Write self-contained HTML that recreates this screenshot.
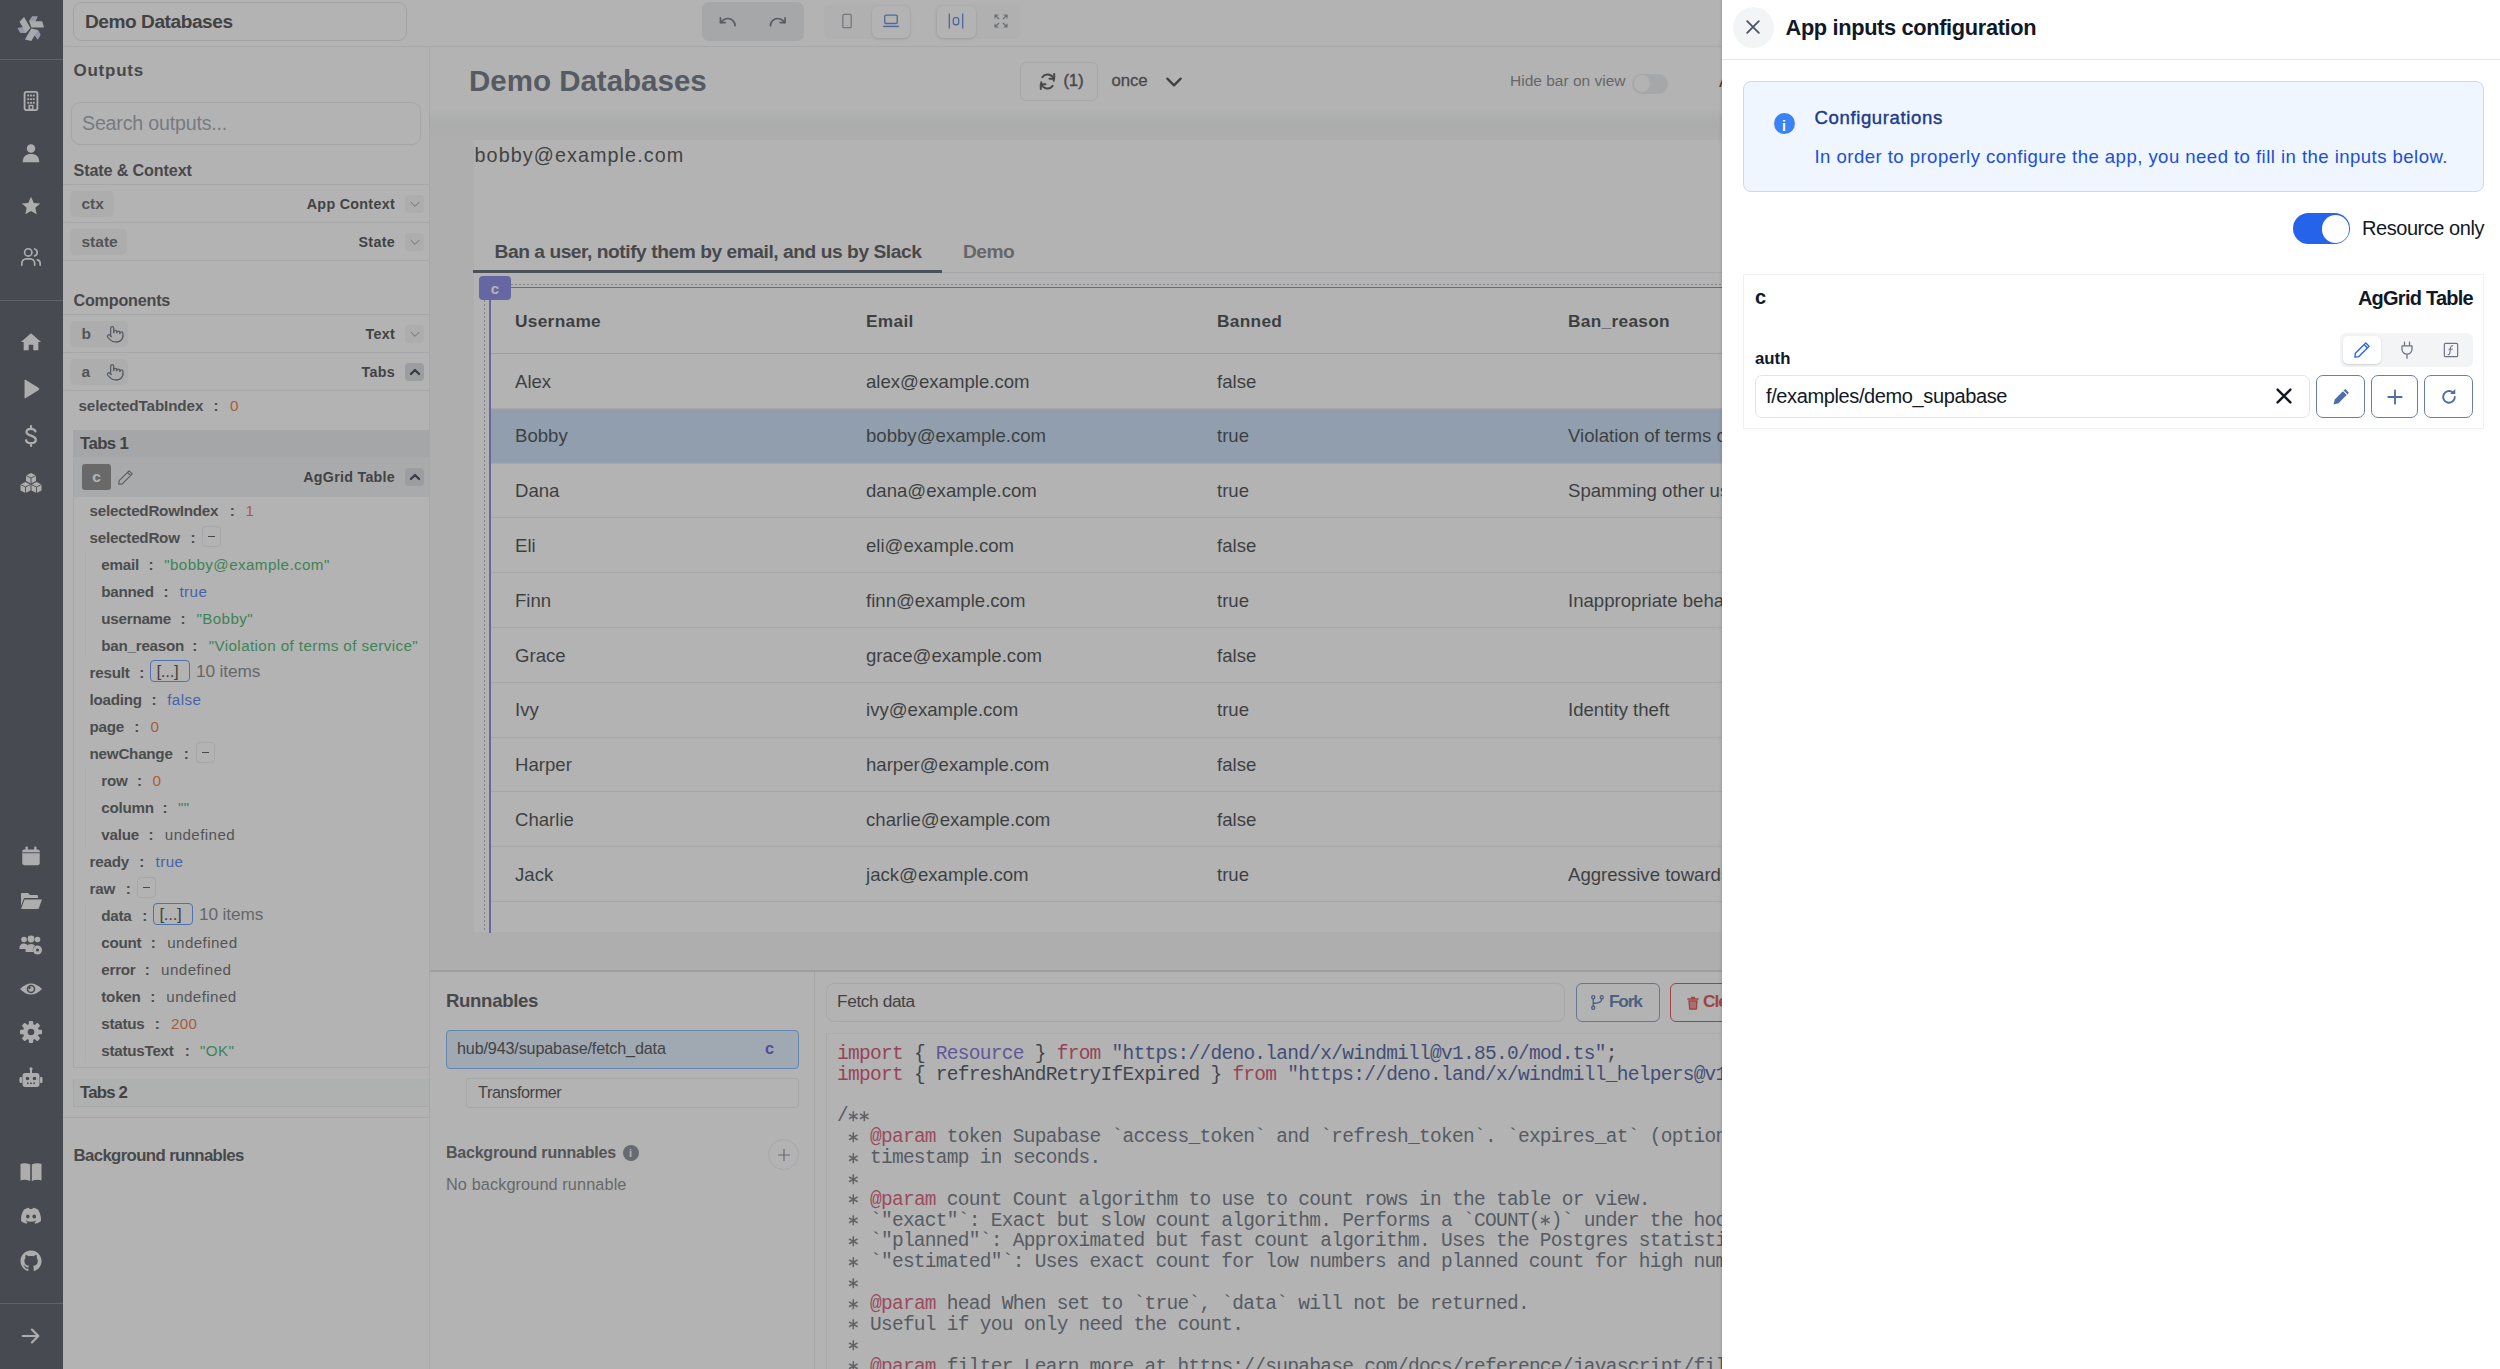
<!DOCTYPE html><html><head><meta charset="utf-8"><style>
html,body{margin:0;padding:0;width:2500px;height:1369px;overflow:hidden;background:#fff;}
.t{position:absolute;white-space:pre;line-height:1;font-family:'Liberation Sans',sans-serif;}
.r{position:absolute;box-sizing:border-box;}
</style></head><body>
<div class="r" style="left:0px;top:0px;width:63px;height:1369px;background:#2e3440;"></div>
<div class="r" style="left:0px;top:59px;width:63px;height:1px;background:#5b6170;"></div>
<div class="r" style="left:0px;top:300px;width:63px;height:1px;background:#5b6170;"></div>
<div class="r" style="left:0px;top:1303px;width:63px;height:1px;background:#5b6170;"></div>
<svg class="r" style="left:16.0px;top:12.5px;" width="30" height="30" viewBox="-15 -15 30 30"><g><polygon points="0.3,-0.5 13,-0.5 11.2,-6.8 4.4,-6.8 6.6,-11.6 1.2,-11.6 -1.8,-6.9" fill="#eceef6"/><polygon points="1.2,-11.6 6.6,-11.6 4.4,-6.8 -1.8,-6.9" fill="#c8c8ee"/></g><g transform="rotate(120)"><polygon points="0.3,-0.5 13,-0.5 11.2,-6.8 4.4,-6.8 6.6,-11.6 1.2,-11.6 -1.8,-6.9" fill="#eceef6"/><polygon points="1.2,-11.6 6.6,-11.6 4.4,-6.8 -1.8,-6.9" fill="#c8c8ee"/></g><g transform="rotate(240)"><polygon points="0.3,-0.5 13,-0.5 11.2,-6.8 4.4,-6.8 6.6,-11.6 1.2,-11.6 -1.8,-6.9" fill="#eceef6"/><polygon points="1.2,-11.6 6.6,-11.6 4.4,-6.8 -1.8,-6.9" fill="#c8c8ee"/></g></svg>
<svg class="r" style="left:20.0px;top:90.0px;" width="22" height="22" viewBox="0 0 24 24"><rect x="5" y="2" width="14" height="20" rx="2" fill="none" stroke="#f3f4f6" stroke-width="2"/>
<g fill="#f3f4f6"><rect x="8" y="5" width="2" height="2"/><rect x="11" y="5" width="2" height="2"/><rect x="14" y="5" width="2" height="2"/>
<rect x="8" y="9" width="2" height="2"/><rect x="11" y="9" width="2" height="2"/><rect x="14" y="9" width="2" height="2"/>
<rect x="8" y="13" width="2" height="2"/><rect x="11" y="13" width="2" height="2"/><rect x="14" y="13" width="2" height="2"/>
<rect x="10" y="17" width="4" height="4" fill="none" stroke="#f3f4f6" stroke-width="1.6"/></g></svg>
<svg class="r" style="left:20.0px;top:142.0px;" width="22" height="22" viewBox="0 0 24 24"><circle cx="12" cy="7" r="4.6" fill="#f3f4f6"/><path d="M3,22 C3,15.5 6.5,13 12,13 C17.5,13 21,15.5 21,22 Z" fill="#f3f4f6"/></svg>
<svg class="r" style="left:20.0px;top:195.0px;" width="22" height="22" viewBox="0 0 24 24"><path d="M12,2 L15,8.6 L22,9.3 L16.7,14 L18.2,21 L12,17.4 L5.8,21 L7.3,14 L2,9.3 L9,8.6 Z" fill="#f3f4f6"/></svg>
<svg class="r" style="left:20.0px;top:246.0px;" width="22" height="22" viewBox="0 0 24 24"><g fill="none" stroke="#f3f4f6" stroke-width="1.8" stroke-linecap="round"><circle cx="9" cy="7" r="4"/><path d="M2,21 v-2 a5,5 0 0 1 5,-5 h4 a5,5 0 0 1 5,5 v2"/><path d="M16,3.2 a4,4 0 0 1 0,7.6"/><path d="M22,21 v-2 a4,4 0 0 0 -3,-3.9"/></g></svg>
<svg class="r" style="left:20.0px;top:331.0px;" width="22" height="22" viewBox="0 0 24 24"><path d="M12,2.5 L23,12 L20,12 L20,21 L14.5,21 L14.5,15 L9.5,15 L9.5,21 L4,21 L4,12 L1,12 Z" fill="#f3f4f6"/></svg>
<svg class="r" style="left:20.0px;top:378.0px;" width="22" height="22" viewBox="0 0 24 24"><path d="M5,2.5 Q5,1.5 6,2 L20.5,11 Q21.5,12 20.5,13 L6,22 Q5,22.5 5,21.5 Z" fill="#f3f4f6"/></svg>
<svg class="r" style="left:19.0px;top:424.0px;" width="24" height="24" viewBox="0 0 24 24"><path d="M16.5,7.5 C16,5.5 14,4.8 12,4.8 C9.5,4.8 7.5,6 7.5,8 C7.5,12.5 16.8,10.8 16.8,15.8 C16.8,18 14.5,19.2 12,19.2 C9.5,19.2 7.5,18.3 7,16.2 M12,2 V4.8 M12,19.2 V22" fill="none" stroke="#f3f4f6" stroke-width="2.2" stroke-linecap="round"/></svg>
<svg class="r" style="left:19.0px;top:471.0px;" width="24" height="24" viewBox="0 0 24 24"><g fill="#f3f4f6"><path d="M12,2 L17,4.5 L17,10 L12,12.5 L7,10 L7,4.5 Z"/><path d="M6.5,11 L11.5,13.5 L11.5,19.5 L6.5,22 L1.5,19.5 L1.5,13.5 Z"/><path d="M17.5,11 L22.5,13.5 L22.5,19.5 L17.5,22 L12.5,19.5 L12.5,13.5 Z"/></g>
<g fill="none" stroke="#2e3440" stroke-width="0.9"><path d="M7,4.5 L12,7 L17,4.5 M12,7 V12.5"/><path d="M1.5,13.5 L6.5,16 L11.5,13.5 M6.5,16 V22"/><path d="M12.5,13.5 L17.5,16 L22.5,13.5 M17.5,16 V22"/></g></svg>
<svg class="r" style="left:20.0px;top:845.0px;" width="22" height="22" viewBox="0 0 24 24"><g fill="#f3f4f6"><rect x="2.5" y="5" width="19" height="17" rx="2"/><rect x="6" y="1.5" width="2.5" height="5" rx="1"/><rect x="15.5" y="1.5" width="2.5" height="5" rx="1"/></g><rect x="2.5" y="8" width="19" height="1" fill="#2e3440"/></svg>
<svg class="r" style="left:19.0px;top:889.0px;" width="24" height="24" viewBox="0 0 24 24"><path d="M2,5 Q2,4 3,4 L9,4 L11,6 L18,6 Q19,6 19,7 L19,9 L6,9 Q5,9 4.6,10 L2,17 Z" fill="#f3f4f6"/><path d="M5.5,10.5 L23,10.5 L19.5,20 L2,20 Z" fill="#f3f4f6"/></svg>
<svg class="r" style="left:19.0px;top:933.0px;" width="24" height="24" viewBox="0 0 24 24"><g fill="#f3f4f6"><circle cx="5" cy="6.5" r="2.8"/><circle cx="12" cy="6" r="3.4"/><circle cx="18.5" cy="6.5" r="2.8"/>
<path d="M0.5,15 Q0.5,10.5 5,10.5 Q7.5,10.5 8.5,12 L8,16 L0.5,16 Z"/><path d="M6.5,19 Q6.5,11 12,11 Q15,11 16,12.5 Q13.5,14 13.8,17 Q14,18.5 14.5,19 Z"/>
<circle cx="18.5" cy="17" r="4.5"/></g><circle cx="18.5" cy="17" r="1.6" fill="#2e3440"/></svg>
<svg class="r" style="left:19.0px;top:977.0px;" width="24" height="24" viewBox="0 0 24 24"><path d="M1,12 Q12,1 23,12 Q12,23 1,12 Z" fill="#f3f4f6"/><circle cx="12" cy="12" r="4.3" fill="#2e3440"/><circle cx="12" cy="12" r="2.7" fill="#f3f4f6"/><circle cx="10.6" cy="10.8" r="1.3" fill="#2e3440"/></svg>
<svg class="r" style="left:19.0px;top:1019.5px;" width="24" height="24" viewBox="0 0 24 24"><g fill="#f3f4f6" transform="translate(12 12)">
<circle r="8"/>
<rect x="-2.2" y="-11" width="4.4" height="22" rx="1"/>
<rect x="-2.2" y="-11" width="4.4" height="22" rx="1" transform="rotate(45)"/>
<rect x="-2.2" y="-11" width="4.4" height="22" rx="1" transform="rotate(90)"/>
<rect x="-2.2" y="-11" width="4.4" height="22" rx="1" transform="rotate(135)"/>
</g><circle cx="12" cy="12" r="3.3" fill="#2e3440"/></svg>
<svg class="r" style="left:19.0px;top:1066.0px;" width="24" height="24" viewBox="0 0 24 24"><g fill="#f3f4f6"><rect x="3.5" y="7" width="17" height="14" rx="3"/><rect x="11" y="2.5" width="2" height="5"/><circle cx="12" cy="2.8" r="1.6"/><rect x="0.5" y="11" width="2.5" height="6" rx="1"/><rect x="21" y="11" width="2.5" height="6" rx="1"/></g>
<g fill="#2e3440"><circle cx="8.5" cy="12.5" r="1.8"/><circle cx="15.5" cy="12.5" r="1.8"/><rect x="8" y="16.5" width="1.6" height="1.6"/><rect x="11.2" y="16.5" width="1.6" height="1.6"/><rect x="14.4" y="16.5" width="1.6" height="1.6"/></g></svg>
<svg class="r" style="left:19.0px;top:1160.0px;" width="24" height="24" viewBox="0 0 24 24"><g fill="#f3f4f6"><path d="M1.5,4 Q6,2.5 11.2,4.5 L11.2,21 Q6,19 1.5,20.5 Z"/><path d="M22.5,4 Q18,2.5 12.8,4.5 L12.8,21 Q18,19 22.5,20.5 Z"/></g></svg>
<svg class="r" style="left:19.0px;top:1204.0px;" width="24" height="24" viewBox="0 0 24 24"><path d="M5,5.5 Q8,4 10,3.8 L10.6,5 Q12,4.8 13.4,5 L14,3.8 Q16,4 19,5.5 Q22.3,10.5 22,17 Q19.5,19 16.5,19.7 L15.4,18 Q16.5,17.6 17.4,17 L17,16.6 Q12,19 7,16.6 L6.6,17 Q7.5,17.6 8.6,18 L7.5,19.7 Q4.5,19 2,17 Q1.7,10.5 5,5.5 Z" fill="#f3f4f6"/>
<ellipse cx="8.8" cy="12.6" rx="1.8" ry="2" fill="#2e3440"/><ellipse cx="15.2" cy="12.6" rx="1.8" ry="2" fill="#2e3440"/></svg>
<svg class="r" style="left:19.0px;top:1249.0px;" width="24" height="24" viewBox="0 0 24 24"><path fill="#f3f4f6" d="M12 1.5C6.2 1.5 1.5 6.2 1.5 12c0 4.6 3 8.6 7.2 10 .5.1.7-.2.7-.5v-1.8c-2.9.6-3.5-1.4-3.5-1.4-.5-1.2-1.2-1.5-1.2-1.5-1-.6.1-.6.1-.6 1 .1 1.6 1.1 1.6 1.1.9 1.6 2.5 1.1 3.1.9.1-.7.4-1.1.7-1.4-2.3-.3-4.8-1.2-4.8-5.1 0-1.1.4-2 1.1-2.8-.1-.3-.5-1.3.1-2.8 0 0 .9-.3 2.9 1.1.8-.2 1.7-.3 2.6-.3.9 0 1.8.1 2.6.3 2-1.4 2.9-1.1 2.9-1.1.6 1.5.2 2.5.1 2.8.7.8 1.1 1.7 1.1 2.8 0 3.9-2.4 4.8-4.8 5.1.4.3.7 1 .7 1.9v2.9c0 .3.2.6.7.5 4.2-1.4 7.2-5.4 7.2-10C22.5 6.2 17.8 1.5 12 1.5z"/></svg>
<svg class="r" style="left:20.0px;top:1325.0px;" width="22" height="22" viewBox="0 0 24 24"><path d="M3,12 H20 M13,5 L20,12 L13,19" fill="none" stroke="#f3f4f6" stroke-width="2.4" stroke-linecap="round" stroke-linejoin="round"/></svg>
<div class="r" style="left:63px;top:0px;width:1659px;height:46px;background:#ffffff;"></div>
<div class="r" style="left:63px;top:46px;width:1659px;height:1px;background:#e5e7eb;"></div>
<div class="r" style="left:73px;top:2px;width:334px;height:39px;background:#fff;border:1px solid #dde0e4;border-radius:9px;"></div>
<div class="t" style="left:85px;top:12.07px;font-size:19.1px;font-weight:700;color:#222325;letter-spacing:-0.45px;font-family:'Liberation Sans', sans-serif;">Demo Databases</div>
<div class="r" style="left:702px;top:2px;width:102px;height:39px;background:#e5e7eb;border-radius:7px;"></div>
<svg class="r" style="left:717.8px;top:11.8px;" width="19.5" height="19.5" viewBox="0 0 24 24"><g fill="none" stroke="#4b5563" stroke-width="2" stroke-linecap="round" stroke-linejoin="round"><path d="M3 7v6h6"/><path d="M21 17a9 9 0 0 0-9-9 9 9 0 0 0-6 2.3L3 13"/></g></svg>
<svg class="r" style="left:768.2px;top:11.8px;" width="19.5" height="19.5" viewBox="0 0 24 24"><g fill="none" stroke="#4b5563" stroke-width="2" stroke-linecap="round" stroke-linejoin="round"><path d="M21 7v6h-6"/><path d="M3 17a9 9 0 0 1 9-9 9 9 0 0 1 6 2.3l3 2.7"/></g></svg>
<div class="r" style="left:824px;top:4px;width:87px;height:35px;background:#f9fafb;border-radius:7px;"></div>
<div class="r" style="left:872px;top:6px;width:38px;height:32px;background:#ffffff;border-radius:6px;box-shadow:0 1px 3px rgba(0,0,0,0.18);"></div>
<svg class="r" style="left:837.5px;top:12.0px;" width="18" height="18" viewBox="0 0 24 24"><rect x="6.5" y="3" width="11" height="18" rx="1.5" fill="none" stroke="#6b7280" stroke-width="1.4"/><circle cx="12" cy="18" r="0.6" fill="#6b7280"/></svg>
<svg class="r" style="left:881.0px;top:11.0px;" width="20" height="20" viewBox="0 0 24 24"><rect x="4.5" y="5" width="15" height="10" rx="1.5" fill="none" stroke="#3b6fd1" stroke-width="1.6"/><path d="M2.5,18.5 H21.5" stroke="#3b6fd1" stroke-width="1.8"/></svg>
<div class="r" style="left:934px;top:4px;width:87px;height:35px;background:#f9fafb;border-radius:7px;"></div>
<div class="r" style="left:937px;top:6px;width:39px;height:32px;background:#ffffff;border-radius:6px;box-shadow:0 1px 3px rgba(0,0,0,0.18);"></div>
<svg class="r" style="left:946.0px;top:11.0px;" width="20" height="20" viewBox="0 0 24 24"><path d="M4,3 V21 M20,3 V21" stroke="#3b6fd1" stroke-width="1.6"/><rect x="8.8" y="8" width="6.4" height="8.5" rx="2.5" fill="none" stroke="#3b6fd1" stroke-width="1.6"/></svg>
<svg class="r" style="left:991.5px;top:12.0px;" width="18" height="18" viewBox="0 0 24 24"><path d="M4,4 L9,9 M4,4 V8 M4,4 H8 M20,4 L15,9 M20,4 V8 M20,4 H16 M4,20 L9,15 M4,20 V16 M4,20 H8 M20,20 L15,15 M20,20 V16 M20,20 H16" fill="none" stroke="#6b7280" stroke-width="1.5" stroke-linecap="round"/></svg>
<div class="r" style="left:63px;top:47px;width:366px;height:1322px;background:#ffffff;"></div>
<div class="r" style="left:429px;top:47px;width:1px;height:1322px;background:#e5e7eb;"></div>
<div class="t" style="left:73.5px;top:61.75px;font-size:17px;font-weight:700;color:#2f3033;letter-spacing:0.75px;font-family:'Liberation Sans', sans-serif;">Outputs</div>
<div class="r" style="left:71px;top:102px;width:350px;height:43px;background:#fff;border:1px solid #e2e4e8;border-radius:9px;"></div>
<div class="t" style="left:82px;top:113.94px;font-size:19.6px;font-weight:400;color:#8b929c;letter-spacing:-0.18px;font-family:'Liberation Sans', sans-serif;">Search outputs...</div>
<div class="t" style="left:73.5px;top:162.03px;font-size:16.2px;font-weight:700;color:#2f3033;letter-spacing:-0.15px;font-family:'Liberation Sans', sans-serif;">State &amp; Context</div>
<div class="r" style="left:63px;top:184px;width:366px;height:1px;background:#e5e7eb;"></div>
<div class="r" style="left:63px;top:222px;width:366px;height:1px;background:#e5e7eb;"></div>
<div class="r" style="left:70px;top:191px;width:44px;height:26px;background:#f3f4f6;border-radius:5px;"></div>
<div class="t" style="left:81.5px;top:196.32px;font-size:15.5px;font-weight:700;color:#45474b;letter-spacing:0px;font-family:'Liberation Sans', sans-serif;">ctx</div>
<div class="t" style="right:2105px;top:196.84px;font-size:14.3px;font-weight:700;color:#222325;letter-spacing:0.3px;font-family:'Liberation Sans', sans-serif;">App Context</div>
<div class="r" style="left:405px;top:195.0px;width:19px;height:18.0px;background:#f3f4f6;border-radius:4px;"></div>
<svg class="r" style="left:407.5px;top:197.0px;" width="14" height="14" viewBox="0 0 24 24"><path d="M5,9 L12,16 L19,9" fill="none" stroke="#6b7280" stroke-width="1.6" stroke-linecap="round" stroke-linejoin="round"/></svg>
<div class="r" style="left:63px;top:260px;width:366px;height:1px;background:#e5e7eb;"></div>
<div class="r" style="left:70px;top:229px;width:57px;height:26px;background:#f3f4f6;border-radius:5px;"></div>
<div class="t" style="left:81.5px;top:234.32px;font-size:15.5px;font-weight:700;color:#45474b;letter-spacing:0px;font-family:'Liberation Sans', sans-serif;">state</div>
<div class="t" style="right:2105px;top:234.84px;font-size:14.3px;font-weight:700;color:#222325;letter-spacing:0.3px;font-family:'Liberation Sans', sans-serif;">State</div>
<div class="r" style="left:405px;top:233.0px;width:19px;height:18.0px;background:#f3f4f6;border-radius:4px;"></div>
<svg class="r" style="left:407.5px;top:235.0px;" width="14" height="14" viewBox="0 0 24 24"><path d="M5,9 L12,16 L19,9" fill="none" stroke="#6b7280" stroke-width="1.6" stroke-linecap="round" stroke-linejoin="round"/></svg>
<div class="t" style="left:73.5px;top:291.73px;font-size:16.2px;font-weight:700;color:#2f3033;letter-spacing:-0.23px;font-family:'Liberation Sans', sans-serif;">Components</div>
<div class="r" style="left:63px;top:314px;width:366px;height:1px;background:#e5e7eb;"></div>
<div class="r" style="left:63px;top:352px;width:366px;height:1px;background:#e5e7eb;"></div>
<div class="r" style="left:70px;top:321px;width:58px;height:26px;background:#f3f4f6;border-radius:5px;"></div>
<div class="t" style="left:81.5px;top:326.32px;font-size:15.5px;font-weight:700;color:#45474b;letter-spacing:0px;font-family:'Liberation Sans', sans-serif;">b</div>
<svg class="r" style="left:106.2px;top:324.8px;" width="18.5" height="18.5" viewBox="0 0 24 24"><g fill="none" stroke="#4b5563" stroke-width="1.6" stroke-linecap="round" stroke-linejoin="round"><path d="M22 14a8 8 0 0 1-8 8"/><path d="M18 11v-1a2 2 0 0 0-2-2a2 2 0 0 0-2 2"/><path d="M14 10V9a2 2 0 0 0-2-2a2 2 0 0 0-2 2v1"/><path d="M10 9.5V4a2 2 0 0 0-2-2a2 2 0 0 0-2 2v10"/><path d="M18 11a2 2 0 1 1 4 0v3a8 8 0 0 1-8 8h-2c-2.8 0-4.5-.86-5.990-2.340l-3.6-3.6a2 2 0 0 1 2.83-2.82L7 15"/></g></svg>
<div class="t" style="right:2105px;top:326.85px;font-size:14.3px;font-weight:700;color:#222325;letter-spacing:0.3px;font-family:'Liberation Sans', sans-serif;">Text</div>
<div class="r" style="left:405px;top:325.0px;width:19px;height:18.0px;background:#f3f4f6;border-radius:4px;"></div>
<svg class="r" style="left:407.5px;top:327.0px;" width="14" height="14" viewBox="0 0 24 24"><path d="M5,9 L12,16 L19,9" fill="none" stroke="#6b7280" stroke-width="1.6" stroke-linecap="round" stroke-linejoin="round"/></svg>
<div class="r" style="left:63px;top:390px;width:366px;height:1px;background:#e5e7eb;"></div>
<div class="r" style="left:70px;top:359px;width:58px;height:26px;background:#f3f4f6;border-radius:5px;"></div>
<div class="t" style="left:81.5px;top:364.32px;font-size:15.5px;font-weight:700;color:#45474b;letter-spacing:0px;font-family:'Liberation Sans', sans-serif;">a</div>
<svg class="r" style="left:106.2px;top:362.8px;" width="18.5" height="18.5" viewBox="0 0 24 24"><g fill="none" stroke="#4b5563" stroke-width="1.6" stroke-linecap="round" stroke-linejoin="round"><path d="M22 14a8 8 0 0 1-8 8"/><path d="M18 11v-1a2 2 0 0 0-2-2a2 2 0 0 0-2 2"/><path d="M14 10V9a2 2 0 0 0-2-2a2 2 0 0 0-2 2v1"/><path d="M10 9.5V4a2 2 0 0 0-2-2a2 2 0 0 0-2 2v10"/><path d="M18 11a2 2 0 1 1 4 0v3a8 8 0 0 1-8 8h-2c-2.8 0-4.5-.86-5.990-2.340l-3.6-3.6a2 2 0 0 1 2.83-2.82L7 15"/></g></svg>
<div class="t" style="right:2105px;top:364.85px;font-size:14.3px;font-weight:700;color:#222325;letter-spacing:0.3px;font-family:'Liberation Sans', sans-serif;">Tabs</div>
<div class="r" style="left:405px;top:363.0px;width:19px;height:18.0px;background:#d1d5db;border-radius:4px;"></div>
<svg class="r" style="left:407.5px;top:365.0px;" width="14" height="14" viewBox="0 0 24 24"><path d="M5,15.5 L12,8.5 L19,15.5" fill="none" stroke="#111827" stroke-width="4" stroke-linecap="round" stroke-linejoin="round"/></svg>
<div class="t" style="left:78.5px;top:398.38px;font-size:15.2px;font-weight:700;color:#35373a;letter-spacing:-0.1px;font-family:'Liberation Sans', sans-serif;">selectedTabIndex</div>
<div class="t" style="left:216px;top:398.38px;font-size:15.2px;font-weight:700;color:#35373a;letter-spacing:0px;font-family:'Liberation Sans', sans-serif;transform:translateX(-50%);">:</div>
<div class="t" style="left:230px;top:398.38px;font-size:15.2px;font-weight:400;color:#ea580c;letter-spacing:0.3px;font-family:'Liberation Sans', sans-serif;">0</div>
<div class="r" style="left:73px;top:430px;width:356px;height:27px;background:#e3e5e8;"></div>
<div class="t" style="left:80px;top:435.92px;font-size:16.8px;font-weight:700;color:#222325;letter-spacing:-0.6px;font-family:'Liberation Sans', sans-serif;">Tabs 1</div>
<div class="r" style="left:73px;top:457px;width:356px;height:40px;background:#eceef1;"></div>
<div class="r" style="left:73px;top:457px;width:1px;height:611px;background:#e5e7eb;"></div>
<div class="r" style="left:73px;top:1067px;width:356px;height:1px;background:#e5e7eb;"></div>
<div class="r" style="left:82px;top:464px;width:29px;height:26px;background:#707070;border-radius:3px;"></div>
<div class="t" style="left:96.5px;top:468.82px;font-size:15.5px;font-weight:700;color:#ffffff;letter-spacing:0px;font-family:'Liberation Sans', sans-serif;transform:translateX(-50%);">c</div>
<svg class="r" style="left:116.0px;top:467.5px;" width="19" height="19" viewBox="0 0 24 24"><path d="M16.5,3.5 L20.5,7.5 L8,20 L3.5,20.5 L4,16 Z M14.5,5.5 L18.5,9.5" fill="none" stroke="#4b5563" stroke-width="1.4" stroke-linejoin="round"/></svg>
<div class="t" style="right:2105px;top:469.54px;font-size:14.3px;font-weight:700;color:#222325;letter-spacing:0.25px;font-family:'Liberation Sans', sans-serif;">AgGrid Table</div>
<div class="r" style="left:405px;top:468px;width:19px;height:18px;background:#d1d5db;border-radius:4px;"></div>
<svg class="r" style="left:407.5px;top:470.0px;" width="14" height="14" viewBox="0 0 24 24"><path d="M5,15.5 L12,8.5 L19,15.5" fill="none" stroke="#111827" stroke-width="4" stroke-linecap="round" stroke-linejoin="round"/></svg>
<div class="t" style="left:89.6px;top:502.58px;font-size:15.2px;font-weight:700;color:#35373a;letter-spacing:-0.25px;font-family:'Liberation Sans', sans-serif;">selectedRowIndex</div>
<div class="t" style="left:232.3px;top:502.58px;font-size:15.2px;font-weight:700;color:#35373a;letter-spacing:0px;font-family:'Liberation Sans', sans-serif;transform:translateX(-50%);">:</div>
<div class="t" style="left:245.5px;top:502.58px;font-size:15.2px;font-weight:400;color:#ea580c;letter-spacing:0.4px;font-family:'Liberation Sans', sans-serif;">1</div>
<div class="t" style="left:89.6px;top:529.58px;font-size:15.2px;font-weight:700;color:#35373a;letter-spacing:-0.25px;font-family:'Liberation Sans', sans-serif;">selectedRow</div>
<div class="t" style="left:193px;top:529.58px;font-size:15.2px;font-weight:700;color:#35373a;letter-spacing:0px;font-family:'Liberation Sans', sans-serif;transform:translateX(-50%);">:</div>
<div class="r" style="left:201.6px;top:525.5px;width:19.5px;height:21.5px;background:#fff;border:1px solid #e5e7eb;border-radius:4px;"></div>
<div class="r" style="left:208.1px;top:535.7px;width:6.5px;height:1.599999999999909px;background:#2f3033;"></div>
<div class="t" style="left:101.3px;top:556.58px;font-size:15.2px;font-weight:700;color:#35373a;letter-spacing:-0.25px;font-family:'Liberation Sans', sans-serif;">email</div>
<div class="t" style="left:151px;top:556.58px;font-size:15.2px;font-weight:700;color:#35373a;letter-spacing:0px;font-family:'Liberation Sans', sans-serif;transform:translateX(-50%);">:</div>
<div class="t" style="left:164.2px;top:556.58px;font-size:15.2px;font-weight:400;color:#16a34a;letter-spacing:0.4px;font-family:'Liberation Sans', sans-serif;">&quot;bobby@example.com&quot;</div>
<div class="t" style="left:101.3px;top:583.58px;font-size:15.2px;font-weight:700;color:#35373a;letter-spacing:-0.25px;font-family:'Liberation Sans', sans-serif;">banned</div>
<div class="t" style="left:166px;top:583.58px;font-size:15.2px;font-weight:700;color:#35373a;letter-spacing:0px;font-family:'Liberation Sans', sans-serif;transform:translateX(-50%);">:</div>
<div class="t" style="left:179.5px;top:583.58px;font-size:15.2px;font-weight:400;color:#2563eb;letter-spacing:0.4px;font-family:'Liberation Sans', sans-serif;">true</div>
<div class="t" style="left:101.3px;top:610.58px;font-size:15.2px;font-weight:700;color:#35373a;letter-spacing:-0.25px;font-family:'Liberation Sans', sans-serif;">username</div>
<div class="t" style="left:183px;top:610.58px;font-size:15.2px;font-weight:700;color:#35373a;letter-spacing:0px;font-family:'Liberation Sans', sans-serif;transform:translateX(-50%);">:</div>
<div class="t" style="left:196.4px;top:610.58px;font-size:15.2px;font-weight:400;color:#16a34a;letter-spacing:0.4px;font-family:'Liberation Sans', sans-serif;">&quot;Bobby&quot;</div>
<div class="t" style="left:101.3px;top:637.58px;font-size:15.2px;font-weight:700;color:#35373a;letter-spacing:-0.25px;font-family:'Liberation Sans', sans-serif;">ban_reason</div>
<div class="t" style="left:194.8px;top:637.58px;font-size:15.2px;font-weight:700;color:#35373a;letter-spacing:0px;font-family:'Liberation Sans', sans-serif;transform:translateX(-50%);">:</div>
<div class="t" style="left:208.7px;top:637.58px;font-size:15.2px;font-weight:400;color:#16a34a;letter-spacing:0.4px;font-family:'Liberation Sans', sans-serif;">&quot;Violation of terms of service&quot;</div>
<div class="t" style="left:89.6px;top:664.58px;font-size:15.2px;font-weight:700;color:#35373a;letter-spacing:-0.25px;font-family:'Liberation Sans', sans-serif;">result</div>
<div class="t" style="left:141.8px;top:664.58px;font-size:15.2px;font-weight:700;color:#35373a;letter-spacing:0px;font-family:'Liberation Sans', sans-serif;transform:translateX(-50%);">:</div>
<div class="r" style="left:150.4px;top:660.0px;width:40.0px;height:22.0px;background:#fff;border:1px solid #3b82f6;border-radius:4px;"></div>
<div class="t" style="left:156.4px;top:663.05px;font-size:17px;font-weight:400;color:#222325;letter-spacing:-0.3px;font-family:'Liberation Sans', sans-serif;">[...]</div>
<div class="t" style="left:195.9px;top:662.79px;font-size:17.3px;font-weight:400;color:#6a6c70;letter-spacing:-0.1px;font-family:'Liberation Sans', sans-serif;">10 items</div>
<div class="t" style="left:89.6px;top:691.58px;font-size:15.2px;font-weight:700;color:#35373a;letter-spacing:-0.25px;font-family:'Liberation Sans', sans-serif;">loading</div>
<div class="t" style="left:154px;top:691.58px;font-size:15.2px;font-weight:700;color:#35373a;letter-spacing:0px;font-family:'Liberation Sans', sans-serif;transform:translateX(-50%);">:</div>
<div class="t" style="left:167.2px;top:691.58px;font-size:15.2px;font-weight:400;color:#2563eb;letter-spacing:0.4px;font-family:'Liberation Sans', sans-serif;">false</div>
<div class="t" style="left:89.6px;top:718.58px;font-size:15.2px;font-weight:700;color:#35373a;letter-spacing:-0.25px;font-family:'Liberation Sans', sans-serif;">page</div>
<div class="t" style="left:136.9px;top:718.58px;font-size:15.2px;font-weight:700;color:#35373a;letter-spacing:0px;font-family:'Liberation Sans', sans-serif;transform:translateX(-50%);">:</div>
<div class="t" style="left:150.4px;top:718.58px;font-size:15.2px;font-weight:400;color:#ea580c;letter-spacing:0.4px;font-family:'Liberation Sans', sans-serif;">0</div>
<div class="t" style="left:89.6px;top:745.58px;font-size:15.2px;font-weight:700;color:#35373a;letter-spacing:-0.25px;font-family:'Liberation Sans', sans-serif;">newChange</div>
<div class="t" style="left:186.3px;top:745.58px;font-size:15.2px;font-weight:700;color:#35373a;letter-spacing:0px;font-family:'Liberation Sans', sans-serif;transform:translateX(-50%);">:</div>
<div class="r" style="left:195.5px;top:741.5px;width:19.5px;height:21.5px;background:#fff;border:1px solid #e5e7eb;border-radius:4px;"></div>
<div class="r" style="left:202.0px;top:751.7px;width:6.5px;height:1.599999999999909px;background:#2f3033;"></div>
<div class="t" style="left:101.3px;top:772.58px;font-size:15.2px;font-weight:700;color:#35373a;letter-spacing:-0.25px;font-family:'Liberation Sans', sans-serif;">row</div>
<div class="t" style="left:139.6px;top:772.58px;font-size:15.2px;font-weight:700;color:#35373a;letter-spacing:0px;font-family:'Liberation Sans', sans-serif;transform:translateX(-50%);">:</div>
<div class="t" style="left:152.5px;top:772.58px;font-size:15.2px;font-weight:400;color:#ea580c;letter-spacing:0.4px;font-family:'Liberation Sans', sans-serif;">0</div>
<div class="t" style="left:101.3px;top:799.58px;font-size:15.2px;font-weight:700;color:#35373a;letter-spacing:-0.25px;font-family:'Liberation Sans', sans-serif;">column</div>
<div class="t" style="left:165px;top:799.58px;font-size:15.2px;font-weight:700;color:#35373a;letter-spacing:0px;font-family:'Liberation Sans', sans-serif;transform:translateX(-50%);">:</div>
<div class="t" style="left:178px;top:799.58px;font-size:15.2px;font-weight:400;color:#16a34a;letter-spacing:0.4px;font-family:'Liberation Sans', sans-serif;">&quot;&quot;</div>
<div class="t" style="left:101.3px;top:826.58px;font-size:15.2px;font-weight:700;color:#35373a;letter-spacing:-0.25px;font-family:'Liberation Sans', sans-serif;">value</div>
<div class="t" style="left:151px;top:826.58px;font-size:15.2px;font-weight:700;color:#35373a;letter-spacing:0px;font-family:'Liberation Sans', sans-serif;transform:translateX(-50%);">:</div>
<div class="t" style="left:164.8px;top:826.58px;font-size:15.2px;font-weight:400;color:#45474b;letter-spacing:0.4px;font-family:'Liberation Sans', sans-serif;">undefined</div>
<div class="t" style="left:89.6px;top:853.58px;font-size:15.2px;font-weight:700;color:#35373a;letter-spacing:-0.25px;font-family:'Liberation Sans', sans-serif;">ready</div>
<div class="t" style="left:141.8px;top:853.58px;font-size:15.2px;font-weight:700;color:#35373a;letter-spacing:0px;font-family:'Liberation Sans', sans-serif;transform:translateX(-50%);">:</div>
<div class="t" style="left:155.6px;top:853.58px;font-size:15.2px;font-weight:400;color:#2563eb;letter-spacing:0.4px;font-family:'Liberation Sans', sans-serif;">true</div>
<div class="t" style="left:89.6px;top:880.58px;font-size:15.2px;font-weight:700;color:#35373a;letter-spacing:-0.25px;font-family:'Liberation Sans', sans-serif;">raw</div>
<div class="t" style="left:128.3px;top:880.58px;font-size:15.2px;font-weight:700;color:#35373a;letter-spacing:0px;font-family:'Liberation Sans', sans-serif;transform:translateX(-50%);">:</div>
<div class="r" style="left:136.5px;top:876.5px;width:19.5px;height:21.5px;background:#fff;border:1px solid #e5e7eb;border-radius:4px;"></div>
<div class="r" style="left:143.0px;top:886.7px;width:6.5px;height:1.599999999999909px;background:#2f3033;"></div>
<div class="t" style="left:101.3px;top:907.58px;font-size:15.2px;font-weight:700;color:#35373a;letter-spacing:-0.25px;font-family:'Liberation Sans', sans-serif;">data</div>
<div class="t" style="left:144.8px;top:907.58px;font-size:15.2px;font-weight:700;color:#35373a;letter-spacing:0px;font-family:'Liberation Sans', sans-serif;transform:translateX(-50%);">:</div>
<div class="r" style="left:153.4px;top:903.0px;width:40.0px;height:22.0px;background:#fff;border:1px solid #3b82f6;border-radius:4px;"></div>
<div class="t" style="left:159.4px;top:906.05px;font-size:17px;font-weight:400;color:#222325;letter-spacing:-0.3px;font-family:'Liberation Sans', sans-serif;">[...]</div>
<div class="t" style="left:198.9px;top:905.79px;font-size:17.3px;font-weight:400;color:#6a6c70;letter-spacing:-0.1px;font-family:'Liberation Sans', sans-serif;">10 items</div>
<div class="t" style="left:101.3px;top:934.58px;font-size:15.2px;font-weight:700;color:#35373a;letter-spacing:-0.25px;font-family:'Liberation Sans', sans-serif;">count</div>
<div class="t" style="left:153.4px;top:934.58px;font-size:15.2px;font-weight:700;color:#35373a;letter-spacing:0px;font-family:'Liberation Sans', sans-serif;transform:translateX(-50%);">:</div>
<div class="t" style="left:167.2px;top:934.58px;font-size:15.2px;font-weight:400;color:#45474b;letter-spacing:0.4px;font-family:'Liberation Sans', sans-serif;">undefined</div>
<div class="t" style="left:101.3px;top:961.58px;font-size:15.2px;font-weight:700;color:#35373a;letter-spacing:-0.25px;font-family:'Liberation Sans', sans-serif;">error</div>
<div class="t" style="left:147.3px;top:961.58px;font-size:15.2px;font-weight:700;color:#35373a;letter-spacing:0px;font-family:'Liberation Sans', sans-serif;transform:translateX(-50%);">:</div>
<div class="t" style="left:161.1px;top:961.58px;font-size:15.2px;font-weight:400;color:#45474b;letter-spacing:0.4px;font-family:'Liberation Sans', sans-serif;">undefined</div>
<div class="t" style="left:101.3px;top:988.58px;font-size:15.2px;font-weight:700;color:#35373a;letter-spacing:-0.25px;font-family:'Liberation Sans', sans-serif;">token</div>
<div class="t" style="left:152.8px;top:988.58px;font-size:15.2px;font-weight:700;color:#35373a;letter-spacing:0px;font-family:'Liberation Sans', sans-serif;transform:translateX(-50%);">:</div>
<div class="t" style="left:166.3px;top:988.58px;font-size:15.2px;font-weight:400;color:#45474b;letter-spacing:0.4px;font-family:'Liberation Sans', sans-serif;">undefined</div>
<div class="t" style="left:101.3px;top:1015.58px;font-size:15.2px;font-weight:700;color:#35373a;letter-spacing:-0.25px;font-family:'Liberation Sans', sans-serif;">status</div>
<div class="t" style="left:157.4px;top:1015.58px;font-size:15.2px;font-weight:700;color:#35373a;letter-spacing:0px;font-family:'Liberation Sans', sans-serif;transform:translateX(-50%);">:</div>
<div class="t" style="left:170.9px;top:1015.58px;font-size:15.2px;font-weight:400;color:#ea580c;letter-spacing:0.4px;font-family:'Liberation Sans', sans-serif;">200</div>
<div class="t" style="left:101.3px;top:1042.58px;font-size:15.2px;font-weight:700;color:#35373a;letter-spacing:-0.25px;font-family:'Liberation Sans', sans-serif;">statusText</div>
<div class="t" style="left:187.2px;top:1042.58px;font-size:15.2px;font-weight:700;color:#35373a;letter-spacing:0px;font-family:'Liberation Sans', sans-serif;transform:translateX(-50%);">:</div>
<div class="t" style="left:200px;top:1042.58px;font-size:15.2px;font-weight:400;color:#16a34a;letter-spacing:0.4px;font-family:'Liberation Sans', sans-serif;">&quot;OK&quot;</div>
<div class="r" style="left:85px;top:552px;width:1px;height:106px;background:#f3f4f6;"></div>
<div class="r" style="left:85px;top:767px;width:1px;height:81px;background:#f3f4f6;"></div>
<div class="r" style="left:85px;top:902px;width:1px;height:160px;background:#f3f4f6;"></div>
<div class="r" style="left:73px;top:1079px;width:356px;height:27px;background:#f8f9fa;"></div>
<div class="r" style="left:73px;top:1079px;width:1px;height:27px;background:#e5e7eb;"></div>
<div class="r" style="left:73px;top:1106px;width:356px;height:1px;background:#e5e7eb;"></div>
<div class="t" style="left:80px;top:1084.92px;font-size:16.8px;font-weight:700;color:#222325;letter-spacing:-0.8px;font-family:'Liberation Sans', sans-serif;">Tabs 2</div>
<div class="r" style="left:63px;top:1117px;width:366px;height:1px;background:#e5e7eb;"></div>
<div class="t" style="left:73.5px;top:1148.02px;font-size:16.8px;font-weight:700;color:#2f3033;letter-spacing:-0.63px;font-family:'Liberation Sans', sans-serif;">Background runnables</div>
<div class="r" style="left:430px;top:47px;width:1292px;height:924px;background:#f6f6f7;"></div>
<div class="r" style="left:430px;top:47px;width:1292px;height:67px;background:#ffffff;"></div>
<div class="r" style="left:430px;top:111px;width:1292px;height:29px;background:linear-gradient(#fdfdfd 0px,#f3f4f5 8px,#f1f2f3 16px,#f3f4f5 24px,#f6f6f7 29px);"></div>
<div class="t" style="left:469px;top:65.92px;font-size:29.5px;font-weight:700;color:#4b5563;letter-spacing:0.0px;font-family:'Liberation Sans', sans-serif;">Demo Databases</div>
<div class="r" style="left:1020px;top:62px;width:78px;height:39px;background:#fff;border:1px solid #e5e7eb;border-radius:6px;"></div>
<svg class="r" style="left:1038.0px;top:72.0px;" width="19" height="19" viewBox="0 0 24 24"><path d="M20,11 A8,8 0 0 0 5.5,6.5 M4,13 A8,8 0 0 0 18.5,17.5" fill="none" stroke="#2f3033" stroke-width="2.5" stroke-linecap="round"/><path d="M20.5,2.5 V8.5 H14.5 M3.5,21.5 V15.5 H9.5" fill="none" stroke="#2f3033" stroke-width="2.5" stroke-linecap="round" stroke-linejoin="round"/></svg>
<div class="t" style="left:1063.5px;top:73.40px;font-size:16px;font-weight:400;color:#2f3033;letter-spacing:0.2px;font-family:'Liberation Sans', sans-serif;-webkit-text-stroke:0.5px #2f3033;">(1)</div>
<div class="t" style="left:1111.5px;top:72.52px;font-size:16.8px;font-weight:400;color:#2f3033;letter-spacing:-0.1px;font-family:'Liberation Sans', sans-serif;-webkit-text-stroke:0.3px #2f3033;">once</div>
<svg class="r" style="left:1163.5px;top:71.5px;" width="20" height="20" viewBox="0 0 24 24"><path d="M4,8 L12,16 L20,8" fill="none" stroke="#1f2023" stroke-width="2.8" stroke-linecap="round" stroke-linejoin="round"/></svg>
<div class="t" style="left:1510px;top:73.03px;font-size:15.5px;font-weight:400;color:#6a6c70;letter-spacing:0.0px;font-family:'Liberation Sans', sans-serif;">Hide bar on view</div>
<div class="r" style="left:1632px;top:73.5px;width:36px;height:20.5px;background:#e5e7eb;border-radius:11px;"></div>
<div class="r" style="left:1632.5px;top:74px;width:18px;height:19px;border-radius:50%;background:#fff;border:1px solid #e5e7eb"></div>
<div class="t" style="left:1719px;top:71.70px;font-size:18px;font-weight:400;color:#222325;letter-spacing:0px;font-family:'Liberation Sans', sans-serif;">A</div>
<div class="r" style="left:474px;top:140px;width:1248px;height:88px;background:#ffffff;"></div>
<div class="t" style="left:474.5px;top:145.67px;font-size:19.8px;font-weight:400;color:#222325;letter-spacing:1.07px;font-family:'Liberation Sans', sans-serif;">bobby@example.com</div>
<div class="r" style="left:474px;top:228px;width:1248px;height:704px;background:#ffffff;"></div>
<div class="t" style="left:494.5px;top:241.98px;font-size:19.2px;font-weight:700;color:#2f3033;letter-spacing:-0.45px;font-family:'Liberation Sans', sans-serif;">Ban a user, notify them by email, and us by Slack</div>
<div class="t" style="left:963px;top:241.98px;font-size:19.2px;font-weight:700;color:#6a6c70;letter-spacing:-0.55px;font-family:'Liberation Sans', sans-serif;">Demo</div>
<div class="r" style="left:473px;top:272px;width:1249px;height:1px;background:#e5e7eb;"></div>
<div class="r" style="left:473px;top:270px;width:469px;height:3px;background:#374151;"></div>
<div class="r" style="left:511px;top:284px;width:1211px;height:1px;background:repeating-linear-gradient(90deg,#9ca3af 0 2px,transparent 2px 4px);"></div>
<div class="r" style="left:489px;top:286.6px;width:1233px;height:1.3999999999999773px;background:#6a6ae0;"></div>
<div class="r" style="left:483.5px;top:300px;width:1.0px;height:632px;background:repeating-linear-gradient(180deg,#9ca3af 0 2px,transparent 2px 4px);"></div>
<div class="r" style="left:489px;top:287px;width:1.5px;height:646px;background:#6a6ae0;"></div>
<div class="r" style="left:479px;top:276px;width:32px;height:24px;background:#6a6ae0;border-radius:4px;"></div>
<div class="t" style="left:495px;top:280.75px;font-size:15px;font-weight:700;color:#ffffff;letter-spacing:0px;font-family:'Liberation Sans', sans-serif;transform:translateX(-50%);">c</div>
<div class="r" style="left:491px;top:353px;width:1231px;height:1px;background:#d1d5db;"></div>
<div class="t" style="left:515px;top:313.30px;font-size:17.3px;font-weight:700;color:#181d1f;letter-spacing:0.3px;font-family:'Liberation Sans', sans-serif;">Username</div>
<div class="t" style="left:866px;top:313.30px;font-size:17.3px;font-weight:700;color:#181d1f;letter-spacing:0.3px;font-family:'Liberation Sans', sans-serif;">Email</div>
<div class="t" style="left:1217px;top:313.30px;font-size:17.3px;font-weight:700;color:#181d1f;letter-spacing:0.3px;font-family:'Liberation Sans', sans-serif;">Banned</div>
<div class="t" style="left:1568px;top:313.30px;font-size:17.3px;font-weight:700;color:#181d1f;letter-spacing:0.3px;font-family:'Liberation Sans', sans-serif;">Ban_reason</div>
<div class="r" style="left:491px;top:407.8px;width:1231px;height:1.0px;background:#e5e7eb;"></div>
<div class="t" style="left:515px;top:372.69px;font-size:18.6px;font-weight:400;color:#181d1f;letter-spacing:0.0px;font-family:'Liberation Sans', sans-serif;">Alex</div>
<div class="t" style="left:866px;top:372.69px;font-size:18.6px;font-weight:400;color:#181d1f;letter-spacing:0.0px;font-family:'Liberation Sans', sans-serif;">alex@example.com</div>
<div class="t" style="left:1217px;top:372.69px;font-size:18.6px;font-weight:400;color:#181d1f;letter-spacing:0.0px;font-family:'Liberation Sans', sans-serif;">false</div>
<div class="r" style="left:491px;top:408.8px;width:1231px;height:53.80000000000001px;background:#bcd7f5;"></div>
<div class="r" style="left:491px;top:462.6px;width:1231px;height:1.0px;background:#e5e7eb;"></div>
<div class="t" style="left:515px;top:427.49px;font-size:18.6px;font-weight:400;color:#181d1f;letter-spacing:0.0px;font-family:'Liberation Sans', sans-serif;">Bobby</div>
<div class="t" style="left:866px;top:427.49px;font-size:18.6px;font-weight:400;color:#181d1f;letter-spacing:0.0px;font-family:'Liberation Sans', sans-serif;">bobby@example.com</div>
<div class="t" style="left:1217px;top:427.49px;font-size:18.6px;font-weight:400;color:#181d1f;letter-spacing:0.0px;font-family:'Liberation Sans', sans-serif;">true</div>
<div class="t" style="left:1568px;top:427.49px;font-size:18.6px;font-weight:400;color:#181d1f;letter-spacing:0.0px;font-family:'Liberation Sans', sans-serif;">Violation of terms of service</div>
<div class="r" style="left:491px;top:517.4px;width:1231px;height:1.0px;background:#e5e7eb;"></div>
<div class="t" style="left:515px;top:482.29px;font-size:18.6px;font-weight:400;color:#181d1f;letter-spacing:0.0px;font-family:'Liberation Sans', sans-serif;">Dana</div>
<div class="t" style="left:866px;top:482.29px;font-size:18.6px;font-weight:400;color:#181d1f;letter-spacing:0.0px;font-family:'Liberation Sans', sans-serif;">dana@example.com</div>
<div class="t" style="left:1217px;top:482.29px;font-size:18.6px;font-weight:400;color:#181d1f;letter-spacing:0.0px;font-family:'Liberation Sans', sans-serif;">true</div>
<div class="t" style="left:1568px;top:482.29px;font-size:18.6px;font-weight:400;color:#181d1f;letter-spacing:0.0px;font-family:'Liberation Sans', sans-serif;">Spamming other users</div>
<div class="r" style="left:491px;top:572.1999999999999px;width:1231px;height:1.0px;background:#e5e7eb;"></div>
<div class="t" style="left:515px;top:537.09px;font-size:18.6px;font-weight:400;color:#181d1f;letter-spacing:0.0px;font-family:'Liberation Sans', sans-serif;">Eli</div>
<div class="t" style="left:866px;top:537.09px;font-size:18.6px;font-weight:400;color:#181d1f;letter-spacing:0.0px;font-family:'Liberation Sans', sans-serif;">eli@example.com</div>
<div class="t" style="left:1217px;top:537.09px;font-size:18.6px;font-weight:400;color:#181d1f;letter-spacing:0.0px;font-family:'Liberation Sans', sans-serif;">false</div>
<div class="r" style="left:491px;top:627.0px;width:1231px;height:1.0px;background:#e5e7eb;"></div>
<div class="t" style="left:515px;top:591.89px;font-size:18.6px;font-weight:400;color:#181d1f;letter-spacing:0.0px;font-family:'Liberation Sans', sans-serif;">Finn</div>
<div class="t" style="left:866px;top:591.89px;font-size:18.6px;font-weight:400;color:#181d1f;letter-spacing:0.0px;font-family:'Liberation Sans', sans-serif;">finn@example.com</div>
<div class="t" style="left:1217px;top:591.89px;font-size:18.6px;font-weight:400;color:#181d1f;letter-spacing:0.0px;font-family:'Liberation Sans', sans-serif;">true</div>
<div class="t" style="left:1568px;top:591.89px;font-size:18.6px;font-weight:400;color:#181d1f;letter-spacing:0.0px;font-family:'Liberation Sans', sans-serif;">Inappropriate behavior</div>
<div class="r" style="left:491px;top:681.8px;width:1231px;height:1.0px;background:#e5e7eb;"></div>
<div class="t" style="left:515px;top:646.69px;font-size:18.6px;font-weight:400;color:#181d1f;letter-spacing:0.0px;font-family:'Liberation Sans', sans-serif;">Grace</div>
<div class="t" style="left:866px;top:646.69px;font-size:18.6px;font-weight:400;color:#181d1f;letter-spacing:0.0px;font-family:'Liberation Sans', sans-serif;">grace@example.com</div>
<div class="t" style="left:1217px;top:646.69px;font-size:18.6px;font-weight:400;color:#181d1f;letter-spacing:0.0px;font-family:'Liberation Sans', sans-serif;">false</div>
<div class="r" style="left:491px;top:736.5999999999999px;width:1231px;height:1.0px;background:#e5e7eb;"></div>
<div class="t" style="left:515px;top:701.49px;font-size:18.6px;font-weight:400;color:#181d1f;letter-spacing:0.0px;font-family:'Liberation Sans', sans-serif;">Ivy</div>
<div class="t" style="left:866px;top:701.49px;font-size:18.6px;font-weight:400;color:#181d1f;letter-spacing:0.0px;font-family:'Liberation Sans', sans-serif;">ivy@example.com</div>
<div class="t" style="left:1217px;top:701.49px;font-size:18.6px;font-weight:400;color:#181d1f;letter-spacing:0.0px;font-family:'Liberation Sans', sans-serif;">true</div>
<div class="t" style="left:1568px;top:701.49px;font-size:18.6px;font-weight:400;color:#181d1f;letter-spacing:0.0px;font-family:'Liberation Sans', sans-serif;">Identity theft</div>
<div class="r" style="left:491px;top:791.3999999999999px;width:1231px;height:1.0px;background:#e5e7eb;"></div>
<div class="t" style="left:515px;top:756.29px;font-size:18.6px;font-weight:400;color:#181d1f;letter-spacing:0.0px;font-family:'Liberation Sans', sans-serif;">Harper</div>
<div class="t" style="left:866px;top:756.29px;font-size:18.6px;font-weight:400;color:#181d1f;letter-spacing:0.0px;font-family:'Liberation Sans', sans-serif;">harper@example.com</div>
<div class="t" style="left:1217px;top:756.29px;font-size:18.6px;font-weight:400;color:#181d1f;letter-spacing:0.0px;font-family:'Liberation Sans', sans-serif;">false</div>
<div class="r" style="left:491px;top:846.1999999999999px;width:1231px;height:1.0px;background:#e5e7eb;"></div>
<div class="t" style="left:515px;top:811.09px;font-size:18.6px;font-weight:400;color:#181d1f;letter-spacing:0.0px;font-family:'Liberation Sans', sans-serif;">Charlie</div>
<div class="t" style="left:866px;top:811.09px;font-size:18.6px;font-weight:400;color:#181d1f;letter-spacing:0.0px;font-family:'Liberation Sans', sans-serif;">charlie@example.com</div>
<div class="t" style="left:1217px;top:811.09px;font-size:18.6px;font-weight:400;color:#181d1f;letter-spacing:0.0px;font-family:'Liberation Sans', sans-serif;">false</div>
<div class="r" style="left:491px;top:901.0px;width:1231px;height:1.0px;background:#e5e7eb;"></div>
<div class="t" style="left:515px;top:865.89px;font-size:18.6px;font-weight:400;color:#181d1f;letter-spacing:0.0px;font-family:'Liberation Sans', sans-serif;">Jack</div>
<div class="t" style="left:866px;top:865.89px;font-size:18.6px;font-weight:400;color:#181d1f;letter-spacing:0.0px;font-family:'Liberation Sans', sans-serif;">jack@example.com</div>
<div class="t" style="left:1217px;top:865.89px;font-size:18.6px;font-weight:400;color:#181d1f;letter-spacing:0.0px;font-family:'Liberation Sans', sans-serif;">true</div>
<div class="t" style="left:1568px;top:865.89px;font-size:18.6px;font-weight:400;color:#181d1f;letter-spacing:0.0px;font-family:'Liberation Sans', sans-serif;">Aggressive towards others</div>
<div class="r" style="left:430px;top:969.5px;width:1292px;height:2.5px;background:#d5d8dc;"></div>
<div class="r" style="left:430px;top:972px;width:1292px;height:397px;background:#ffffff;"></div>
<div class="r" style="left:814px;top:972px;width:1px;height:397px;background:#e5e7eb;"></div>
<div class="t" style="left:446px;top:991.69px;font-size:18.6px;font-weight:700;color:#2f3033;letter-spacing:-0.34px;font-family:'Liberation Sans', sans-serif;">Runnables</div>
<div class="r" style="left:446px;top:1030px;width:353px;height:39px;background:#dbeafe;border:1px solid #60a5fa;border-radius:4px;"></div>
<div class="t" style="left:457px;top:1040.23px;font-size:16.2px;font-weight:400;color:#222325;letter-spacing:-0.17px;font-family:'Liberation Sans', sans-serif;">hub/943/supabase/fetch_data</div>
<div class="t" style="left:765px;top:1040.23px;font-size:16.2px;font-weight:700;color:#4338ca;letter-spacing:0px;font-family:'Liberation Sans', sans-serif;">c</div>
<div class="r" style="left:466px;top:1078px;width:333px;height:30px;background:#fff;border:1px solid #e5e7eb;border-radius:3px;"></div>
<div class="t" style="left:478px;top:1084.23px;font-size:16.2px;font-weight:400;color:#222325;letter-spacing:-0.38px;font-family:'Liberation Sans', sans-serif;">Transformer</div>
<div class="t" style="left:446px;top:1144.70px;font-size:16px;font-weight:700;color:#45474b;letter-spacing:-0.22px;font-family:'Liberation Sans', sans-serif;">Background runnables</div>
<div class="r" style="left:622.5px;top:1145px;width:16px;height:16px;border-radius:50%;background:#6b7280"></div>
<div class="t" style="left:630.5px;top:1148.45px;font-size:11px;font-weight:700;color:#fff;letter-spacing:0px;font-family:'Liberation Sans', sans-serif;transform:translateX(-50%);">i</div>
<div class="r" style="left:768px;top:1139px;width:31px;height:31px;border-radius:50%;background:#fff;border:1px solid #e5e7eb"></div>
<svg class="r" style="left:774.5px;top:1145.5px;" width="18" height="18" viewBox="0 0 24 24"><path d="M12,4 V20 M4,12 H20" stroke="#6b7280" stroke-width="1.6"/></svg>
<div class="t" style="left:446px;top:1176.44px;font-size:16.3px;font-weight:400;color:#6a6c70;letter-spacing:0.1px;font-family:'Liberation Sans', sans-serif;">No background runnable</div>
<div class="r" style="left:826px;top:983px;width:739px;height:39px;background:#fff;border:1px solid #e5e7eb;border-radius:8px;"></div>
<div class="t" style="left:837px;top:992.79px;font-size:17.3px;font-weight:400;color:#222325;letter-spacing:-0.39px;font-family:'Liberation Sans', sans-serif;">Fetch data</div>
<div class="r" style="left:1576px;top:983px;width:84px;height:39px;background:#fff;border:1px solid #6b87b8;border-radius:6px;"></div>
<svg class="r" style="left:1589.0px;top:993.5px;" width="17" height="17" viewBox="0 0 24 24"><g fill="none" stroke="#3b5f9f" stroke-width="1.9"><circle cx="6" cy="4.5" r="2.2"/><circle cx="18" cy="4.5" r="2.2"/><circle cx="6" cy="19.5" r="2.2"/><path d="M6,6.7 V17.3 M18,6.7 Q18,13 8,13 H6"/></g></svg>
<div class="t" style="left:1609px;top:993.29px;font-size:17.3px;font-weight:700;color:#3b5f9f;letter-spacing:-1.2px;font-family:'Liberation Sans', sans-serif;">Fork</div>
<div class="r" style="left:1670px;top:983px;width:90px;height:39px;background:#fff;border:1px solid #dc2626;border-radius:6px;"></div>
<svg class="r" style="left:1684.5px;top:994.5px;" width="16" height="16" viewBox="0 0 24 24"><path d="M3.5,5 H20.5 V7 H3.5 Z M9,5 V2.8 H15 V5 M5,8 H19 L18,21.5 Q18,22 17.5,22 H6.5 Q6,22 6,21.5 Z" fill="#dc2626"/><path d="M9,10 V20 M12,10 V20 M15,10 V20" stroke="#fff" stroke-width="1.2"/></svg>
<div class="t" style="left:1703px;top:993.29px;font-size:17.3px;font-weight:700;color:#dc2626;letter-spacing:-1.0px;font-family:'Liberation Sans', sans-serif;">Clear</div>
<div class="r" style="left:826px;top:1033px;width:896px;height:336px;background:#fff;border-left:1px solid #e5e7eb;border-top:1px solid #f3f4f6"></div>
<div class="t" style="left:837px;top:1044.78px;font-size:19.5px;font-weight:400;color:#1f2937;letter-spacing:-0.72px;font-family:'Liberation Mono', monospace;"><span style="color:#c7254e">import</span><span style="color:#1f2937"> { </span><span style="color:#5b4fc9">Resource</span><span style="color:#1f2937"> } </span><span style="color:#c7254e">from</span><span style="color:#1f2937"> </span><span style="color:#1f3a8a">&quot;https://deno.land/x/windmill@v1.85.0/mod.ts&quot;</span><span style="color:#1f2937">;</span></div>
<div class="t" style="left:837px;top:1065.63px;font-size:19.5px;font-weight:400;color:#1f2937;letter-spacing:-0.72px;font-family:'Liberation Mono', monospace;"><span style="color:#c7254e">import</span><span style="color:#1f2937"> { refreshAndRetryIfExpired } </span><span style="color:#c7254e">from</span><span style="color:#1f2937"> </span><span style="color:#1f3a8a">&quot;https://deno.land/x/windmill_helpers@v1.1.1/mod.ts&quot;</span><span style="color:#1f2937">;</span></div>
<svg class="r" style="left:847.2px;top:1109.9px;" width="12.6" height="12.6" viewBox="0 0 24 24"><path d="M12,2.5 V21.5 M3.8,7.3 L20.2,16.7 M3.8,16.7 L20.2,7.3" stroke="#5f6368" stroke-width="2.9" stroke-linecap="butt"/></svg>
<svg class="r" style="left:858.2px;top:1109.9px;" width="12.6" height="12.6" viewBox="0 0 24 24"><path d="M12,2.5 V21.5 M3.8,7.3 L20.2,16.7 M3.8,16.7 L20.2,7.3" stroke="#5f6368" stroke-width="2.9" stroke-linecap="butt"/></svg>
<div class="t" style="left:837px;top:1107.33px;font-size:19.5px;font-weight:400;color:#1f2937;letter-spacing:-0.72px;font-family:'Liberation Mono', monospace;"><span style="color:#4b5563">/  </span></div>
<svg class="r" style="left:847.2px;top:1130.8px;" width="12.6" height="12.6" viewBox="0 0 24 24"><path d="M12,2.5 V21.5 M3.8,7.3 L20.2,16.7 M3.8,16.7 L20.2,7.3" stroke="#5f6368" stroke-width="2.9" stroke-linecap="butt"/></svg>
<div class="t" style="left:837px;top:1128.18px;font-size:19.5px;font-weight:400;color:#1f2937;letter-spacing:-0.72px;font-family:'Liberation Mono', monospace;"><span style="color:#4b5563">   </span><span style="color:#d1345b">@param</span><span style="color:#4b5563"> token Supabase `access_token` and `refresh_token`. `expires_at` (optional) is a UNIX</span></div>
<svg class="r" style="left:847.2px;top:1151.6px;" width="12.6" height="12.6" viewBox="0 0 24 24"><path d="M12,2.5 V21.5 M3.8,7.3 L20.2,16.7 M3.8,16.7 L20.2,7.3" stroke="#5f6368" stroke-width="2.9" stroke-linecap="butt"/></svg>
<div class="t" style="left:837px;top:1149.03px;font-size:19.5px;font-weight:400;color:#1f2937;letter-spacing:-0.72px;font-family:'Liberation Mono', monospace;"><span style="color:#4b5563">   timestamp in seconds.</span></div>
<svg class="r" style="left:847.2px;top:1172.5px;" width="12.6" height="12.6" viewBox="0 0 24 24"><path d="M12,2.5 V21.5 M3.8,7.3 L20.2,16.7 M3.8,16.7 L20.2,7.3" stroke="#5f6368" stroke-width="2.9" stroke-linecap="butt"/></svg>
<div class="t" style="left:837px;top:1169.88px;font-size:19.5px;font-weight:400;color:#1f2937;letter-spacing:-0.72px;font-family:'Liberation Mono', monospace;"><span style="color:#4b5563">  </span></div>
<svg class="r" style="left:847.2px;top:1193.3px;" width="12.6" height="12.6" viewBox="0 0 24 24"><path d="M12,2.5 V21.5 M3.8,7.3 L20.2,16.7 M3.8,16.7 L20.2,7.3" stroke="#5f6368" stroke-width="2.9" stroke-linecap="butt"/></svg>
<div class="t" style="left:837px;top:1190.73px;font-size:19.5px;font-weight:400;color:#1f2937;letter-spacing:-0.72px;font-family:'Liberation Mono', monospace;"><span style="color:#4b5563">   </span><span style="color:#d1345b">@param</span><span style="color:#4b5563"> count Count algorithm to use to count rows in the table or view.</span></div>
<svg class="r" style="left:847.2px;top:1214.2px;" width="12.6" height="12.6" viewBox="0 0 24 24"><path d="M12,2.5 V21.5 M3.8,7.3 L20.2,16.7 M3.8,16.7 L20.2,7.3" stroke="#5f6368" stroke-width="2.9" stroke-linecap="butt"/></svg>
<svg class="r" style="left:1539.0px;top:1214.2px;" width="12.6" height="12.6" viewBox="0 0 24 24"><path d="M12,2.5 V21.5 M3.8,7.3 L20.2,16.7 M3.8,16.7 L20.2,7.3" stroke="#5f6368" stroke-width="2.9" stroke-linecap="butt"/></svg>
<div class="t" style="left:837px;top:1211.58px;font-size:19.5px;font-weight:400;color:#1f2937;letter-spacing:-0.72px;font-family:'Liberation Mono', monospace;"><span style="color:#4b5563">   `&quot;exact&quot;`: Exact but slow count algorithm. Performs a `COUNT( )` under the hood.</span></div>
<svg class="r" style="left:847.2px;top:1235.0px;" width="12.6" height="12.6" viewBox="0 0 24 24"><path d="M12,2.5 V21.5 M3.8,7.3 L20.2,16.7 M3.8,16.7 L20.2,7.3" stroke="#5f6368" stroke-width="2.9" stroke-linecap="butt"/></svg>
<div class="t" style="left:837px;top:1232.43px;font-size:19.5px;font-weight:400;color:#1f2937;letter-spacing:-0.72px;font-family:'Liberation Mono', monospace;"><span style="color:#4b5563">   `&quot;planned&quot;`: Approximated but fast count algorithm. Uses the Postgres statistics under the hood.</span></div>
<svg class="r" style="left:847.2px;top:1255.9px;" width="12.6" height="12.6" viewBox="0 0 24 24"><path d="M12,2.5 V21.5 M3.8,7.3 L20.2,16.7 M3.8,16.7 L20.2,7.3" stroke="#5f6368" stroke-width="2.9" stroke-linecap="butt"/></svg>
<div class="t" style="left:837px;top:1253.28px;font-size:19.5px;font-weight:400;color:#1f2937;letter-spacing:-0.72px;font-family:'Liberation Mono', monospace;"><span style="color:#4b5563">   `&quot;estimated&quot;`: Uses exact count for low numbers and planned count for high numbers.</span></div>
<svg class="r" style="left:847.2px;top:1276.7px;" width="12.6" height="12.6" viewBox="0 0 24 24"><path d="M12,2.5 V21.5 M3.8,7.3 L20.2,16.7 M3.8,16.7 L20.2,7.3" stroke="#5f6368" stroke-width="2.9" stroke-linecap="butt"/></svg>
<div class="t" style="left:837px;top:1274.13px;font-size:19.5px;font-weight:400;color:#1f2937;letter-spacing:-0.72px;font-family:'Liberation Mono', monospace;"><span style="color:#4b5563">  </span></div>
<svg class="r" style="left:847.2px;top:1297.6px;" width="12.6" height="12.6" viewBox="0 0 24 24"><path d="M12,2.5 V21.5 M3.8,7.3 L20.2,16.7 M3.8,16.7 L20.2,7.3" stroke="#5f6368" stroke-width="2.9" stroke-linecap="butt"/></svg>
<div class="t" style="left:837px;top:1294.98px;font-size:19.5px;font-weight:400;color:#1f2937;letter-spacing:-0.72px;font-family:'Liberation Mono', monospace;"><span style="color:#4b5563">   </span><span style="color:#d1345b">@param</span><span style="color:#4b5563"> head When set to `true`, `data` will not be returned.</span></div>
<svg class="r" style="left:847.2px;top:1318.4px;" width="12.6" height="12.6" viewBox="0 0 24 24"><path d="M12,2.5 V21.5 M3.8,7.3 L20.2,16.7 M3.8,16.7 L20.2,7.3" stroke="#5f6368" stroke-width="2.9" stroke-linecap="butt"/></svg>
<div class="t" style="left:837px;top:1315.83px;font-size:19.5px;font-weight:400;color:#1f2937;letter-spacing:-0.72px;font-family:'Liberation Mono', monospace;"><span style="color:#4b5563">   Useful if you only need the count.</span></div>
<svg class="r" style="left:847.2px;top:1339.3px;" width="12.6" height="12.6" viewBox="0 0 24 24"><path d="M12,2.5 V21.5 M3.8,7.3 L20.2,16.7 M3.8,16.7 L20.2,7.3" stroke="#5f6368" stroke-width="2.9" stroke-linecap="butt"/></svg>
<div class="t" style="left:837px;top:1336.68px;font-size:19.5px;font-weight:400;color:#1f2937;letter-spacing:-0.72px;font-family:'Liberation Mono', monospace;"><span style="color:#4b5563">  </span></div>
<svg class="r" style="left:847.2px;top:1360.1px;" width="12.6" height="12.6" viewBox="0 0 24 24"><path d="M12,2.5 V21.5 M3.8,7.3 L20.2,16.7 M3.8,16.7 L20.2,7.3" stroke="#5f6368" stroke-width="2.9" stroke-linecap="butt"/></svg>
<div class="t" style="left:837px;top:1357.53px;font-size:19.5px;font-weight:400;color:#1f2937;letter-spacing:-0.72px;font-family:'Liberation Mono', monospace;"><span style="color:#4b5563">   </span><span style="color:#d1345b">@param</span><span style="color:#4b5563"> filter Learn more at https://supabase.com/docs/reference/javascript/filter</span></div>
<div class="r" style="left:0px;top:0px;width:1722px;height:1369px;background:rgba(99,99,99,0.487);"></div>
<div class="r" style="left:1722px;top:0px;width:778px;height:1369px;background:#ffffff;box-shadow:-1px 0 3px rgba(0,0,0,0.12);"></div>
<div class="r" style="left:1722px;top:59px;width:778px;height:1px;background:#e5e7eb;"></div>
<div class="r" style="left:1732.5px;top:6.5px;width:41px;height:41px;border-radius:50%;background:#f3f4f6"></div>
<svg class="r" style="left:1743.0px;top:17.3px;" width="20" height="20" viewBox="0 0 24 24"><path d="M5,5 L19,19 M19,5 L5,19" stroke="#4b5563" stroke-width="2.2" stroke-linecap="round"/></svg>
<div class="t" style="left:1785.5px;top:17.07px;font-size:21.8px;font-weight:700;color:#111827;letter-spacing:-0.35px;font-family:'Liberation Sans', sans-serif;">App inputs configuration</div>
<div class="r" style="left:1743px;top:81px;width:741px;height:111px;background:#eff6ff;border:1px solid #bfdbfe;border-radius:8px;"></div>
<div class="r" style="left:1773.5px;top:113px;width:21px;height:21px;border-radius:50%;background:#3b82f6"></div>
<div class="t" style="left:1784px;top:118.60px;font-size:14px;font-weight:700;color:#fff;letter-spacing:0px;font-family:'Liberation Sans', sans-serif;transform:translateX(-50%);">i</div>
<div class="t" style="left:1814.5px;top:109.49px;font-size:18.6px;font-weight:400;color:#1e3a8a;letter-spacing:0.6px;font-family:'Liberation Sans', sans-serif;-webkit-text-stroke:0.4px #1e3a8a;">Configurations</div>
<div class="t" style="left:1814.5px;top:147.79px;font-size:18.6px;font-weight:400;color:#1d4ed8;letter-spacing:0.44px;font-family:'Liberation Sans', sans-serif;">In order to properly configure the app, you need to fill in the inputs below.</div>
<div class="r" style="left:2293px;top:213px;width:57px;height:31px;background:#2563eb;border-radius:16px;"></div>
<div class="r" style="left:2321.5px;top:215.2px;width:27.5px;height:27.5px;border-radius:50%;background:#fff"></div>
<div class="t" style="right:16px;top:218.30px;font-size:20px;font-weight:400;color:#111827;letter-spacing:-0.45px;font-family:'Liberation Sans', sans-serif;">Resource only</div>
<div class="r" style="left:1743px;top:274px;width:741px;height:155px;background:#fff;border:1px solid #f0f1f3;"></div>
<div class="t" style="left:1755px;top:287.00px;font-size:20px;font-weight:700;color:#111827;letter-spacing:0px;font-family:'Liberation Sans', sans-serif;">c</div>
<div class="t" style="right:27px;top:287.50px;font-size:20px;font-weight:700;color:#111827;letter-spacing:-0.75px;font-family:'Liberation Sans', sans-serif;">AgGrid Table</div>
<div class="t" style="left:1755px;top:350.72px;font-size:16.8px;font-weight:700;color:#111827;letter-spacing:0.0px;font-family:'Liberation Sans', sans-serif;">auth</div>
<div class="r" style="left:2340px;top:332.5px;width:133px;height:34.0px;background:#f3f4f6;border-radius:6px;"></div>
<div class="r" style="left:2343px;top:335.5px;width:38px;height:28.5px;background:#fff;border-radius:5px;box-shadow:0 1px 2px rgba(0,0,0,0.15);"></div>
<svg class="r" style="left:2352.0px;top:340.0px;" width="20" height="20" viewBox="0 0 24 24"><path d="M16.5,3.5 L20.5,7.5 L8,20 L3.5,20.5 L4,16 Z M14.5,5.5 L18.5,9.5" fill="none" stroke="#2563eb" stroke-width="1.6" stroke-linejoin="round"/></svg>
<svg class="r" style="left:2396.5px;top:340.0px;" width="20" height="20" viewBox="0 0 24 24"><path d="M9,2.5 V7 M15,2.5 V7 M6,7 H18 V11 A6,6 0 0 1 6,11 Z M12,17 V22" fill="none" stroke="#6b7280" stroke-width="1.5" stroke-linecap="round" stroke-linejoin="round"/></svg>
<svg class="r" style="left:2440.5px;top:340.0px;" width="20" height="20" viewBox="0 0 24 24"><rect x="4" y="4" width="16" height="16" rx="1.5" fill="none" stroke="#6b7280" stroke-width="1.4"/><path d="M14.5,7 Q12,6.5 11.5,9 L10.5,16 Q10,18 8,17.5 M9,11 H14" fill="none" stroke="#6b7280" stroke-width="1.3"/></svg>
<div class="r" style="left:1755px;top:375px;width:555px;height:43px;background:#fff;border:1px solid #e2e4e8;border-radius:7px;"></div>
<div class="t" style="left:1766px;top:386.00px;font-size:20px;font-weight:400;color:#111827;letter-spacing:-0.38px;font-family:'Liberation Sans', sans-serif;">f/examples/demo_supabase</div>
<svg class="r" style="left:2272.5px;top:385.0px;" width="22" height="22" viewBox="0 0 24 24"><path d="M5,5 L19,19 M19,5 L5,19" stroke="#111827" stroke-width="2.6" stroke-linecap="round"/></svg>
<div class="r" style="left:2316px;top:375px;width:49px;height:43px;background:#fff;border:1.3px solid #6b7fa6;border-radius:7px;"></div>
<svg class="r" style="left:2330.5px;top:386.5px;" width="20" height="20" viewBox="0 0 24 24"><path d="M17,2.5 L21.5,7 L9,19.5 L3,21 L4.5,15 Z" fill="#4d6da8"/><path d="M14.8,4.7 L19.3,9.2" stroke="#fff" stroke-width="1.3"/></svg>
<div class="r" style="left:2371px;top:375px;width:47px;height:43px;background:#fff;border:1.3px solid #6b7fa6;border-radius:7px;"></div>
<svg class="r" style="left:2384.5px;top:386.5px;" width="20" height="20" viewBox="0 0 24 24"><path d="M12,4 V20 M4,12 H20" stroke="#4d6da8" stroke-width="2.2" stroke-linecap="round"/></svg>
<div class="r" style="left:2424px;top:375px;width:49px;height:43px;background:#fff;border:1.3px solid #6b7fa6;border-radius:7px;"></div>
<svg class="r" style="left:2438.5px;top:386.5px;" width="20" height="20" viewBox="0 0 24 24"><path d="M19,12 A7,7 0 1 1 16.5,6.5" fill="none" stroke="#4d6da8" stroke-width="2.3" stroke-linecap="round"/><path d="M19.5,2.5 V8.5 H13.5 Z" fill="#4d6da8"/></svg>
</body></html>
